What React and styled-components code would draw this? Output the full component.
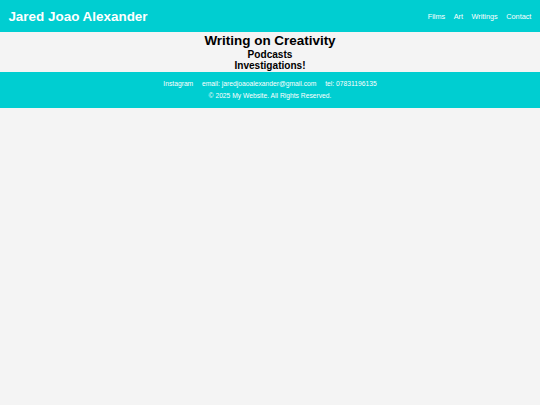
import React from "react";
import styled, { createGlobalStyle } from "styled-components";

const GlobalStyle = createGlobalStyle`
  html, body {
    margin: 0;
    padding: 0;
    background-color: #f4f4f4;
    font-family: "Liberation Sans", Arial, sans-serif;
  }
`;

const Header = styled.header`
  display: flex;
  justify-content: space-between;
  align-items: center;
  height: 32px;
  padding: 0 8.6px 0 8.4px;
  background-color: #00ced1;
  color: #fff;
`;

const Logo = styled.h1`
  margin: 0;
  font-size: 13.44px;
  font-weight: bold;
`;

const Nav = styled.nav`
  display: flex;
  gap: 8.5px;
`;

const NavLink = styled.a`
  color: #fff;
  text-decoration: none;
  font-size: 7.3px;
`;

const Main = styled.main`
  display: flex;
  flex-direction: column;
  align-items: center;
  height: 40px;
  color: #000;
`;

const Title = styled.h1`
  margin: 0;
  font-size: 13.44px;
  line-height: 17px;
  font-weight: bold;
`;

const SubTitle = styled.h2`
  margin: 0;
  font-size: 10.08px;
  line-height: 11.3px;
  font-weight: bold;
`;

const Footer = styled.footer`
  display: flex;
  flex-direction: column;
  align-items: center;
  height: 36px;
  box-sizing: border-box;
  padding-top: 6.4px;
  background-color: #00ced1;
  color: #fff;
  font-size: 6.72px;
`;

const FooterRow = styled.div`
  display: flex;
  gap: 8.8px;
  line-height: 11.7px;
`;

const FooterLink = styled.a`
  color: #fff;
  text-decoration: none;
`;

const Copy = styled.p`
  margin: 0;
  line-height: 11.7px;
`;

export default function App() {
  return (
    <>
      <GlobalStyle />
      <Header>
        <Logo>Jared Joao Alexander</Logo>
        <Nav>
          <NavLink href="#">Films</NavLink>
          <NavLink href="#">Art</NavLink>
          <NavLink href="#">Writings</NavLink>
          <NavLink href="#">Contact</NavLink>
        </Nav>
      </Header>
      <Main>
        <Title>Writing on Creativity</Title>
        <SubTitle>Podcasts</SubTitle>
        <SubTitle>Investigations!</SubTitle>
      </Main>
      <Footer>
        <FooterRow>
          <FooterLink href="#">Instagram</FooterLink>
          <span>email: jaredjoaoalexander@gmail.com</span>
          <span>tel: 07831196135</span>
        </FooterRow>
        <Copy>© 2025 My Website. All Rights Reserved.</Copy>
      </Footer>
    </>
  );
}
